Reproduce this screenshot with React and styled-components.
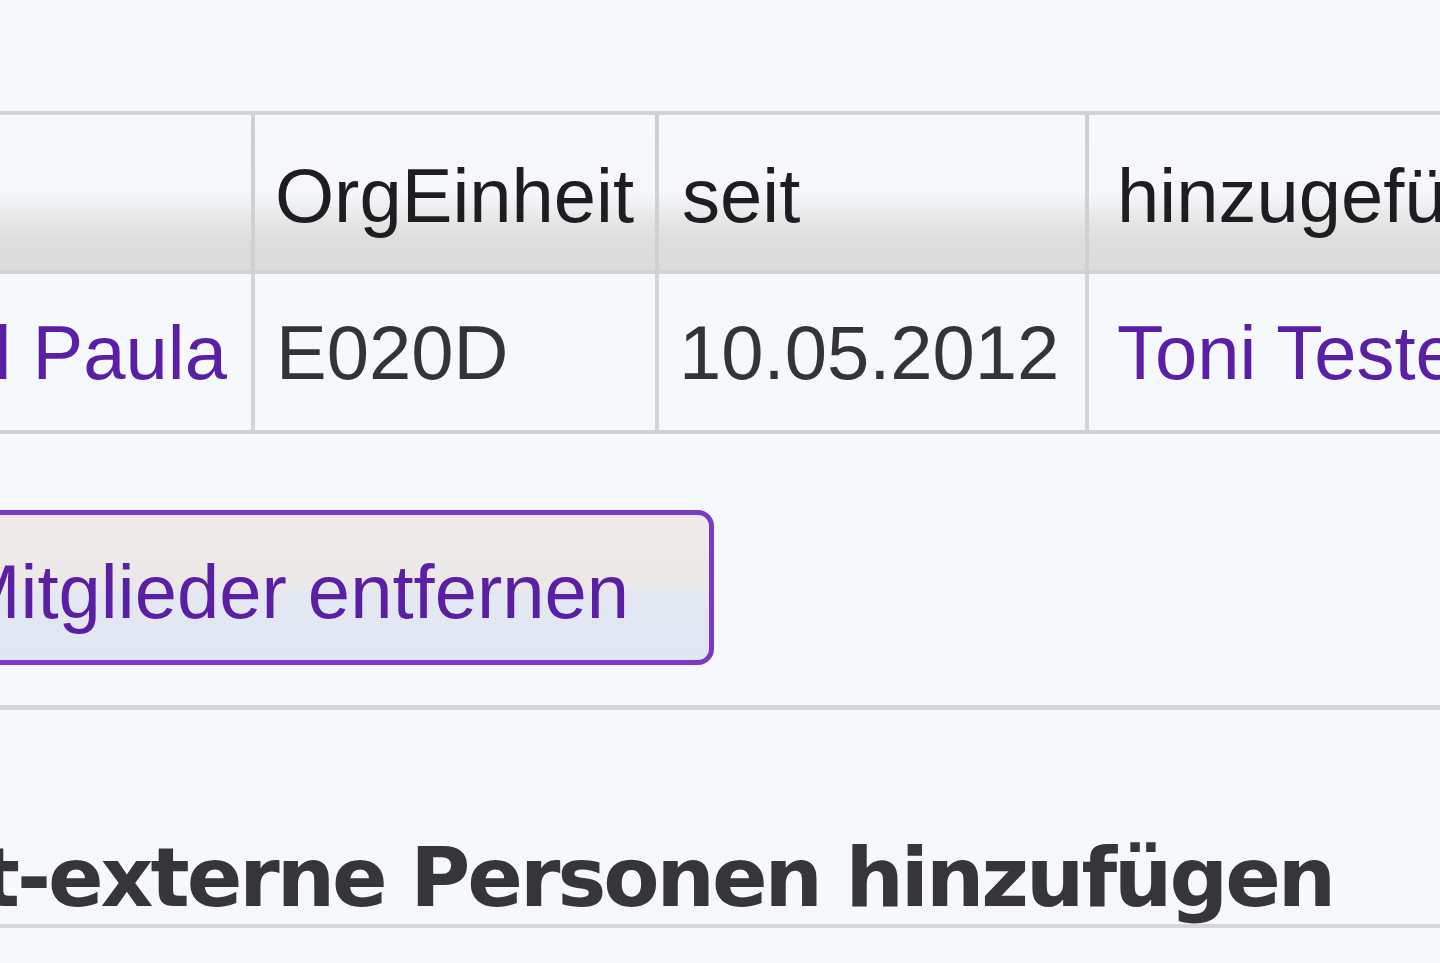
import React from "react";
import styled, { createGlobalStyle } from "styled-components";

const GlobalStyle = createGlobalStyle`
  html, body {
    margin: 0;
    padding: 0;
    background: #f6f9fb;
  }
  body {
    overflow: hidden;
    font-family: "Liberation Sans", Arial, sans-serif;
  }
`;

const Viewport = styled.div`
  width: 1440px;
  height: 963px;
  overflow: hidden;
  background: #f6f9fb;
`;

const Page = styled.div`
  width: 2600px;
  margin-left: -600px;
  padding-top: 111px;
`;

const Table = styled.div`
  display: grid;
  grid-template-columns: 851px 404px 430px 1fr;
  border-top: 4px solid #d3d4d6;
  border-bottom: 4px solid #d0d1d3;
  font-size: 76px;
  line-height: 86px;
`;

const HeadCell = styled.div`
  box-sizing: border-box;
  height: 159px;
  display: flex;
  align-items: center;
  padding: 6px 20px 0 ${(p) => p.$pad || 20}px;
  border-bottom: 4px solid #d2d2d4;
  border-left: ${(p) => (p.$first ? "none" : "4px solid #cfd0d3")};
  background: linear-gradient(
    to bottom,
    #f7f9fb 0%,
    #f5f7f8 50%,
    #e8e8e9 66%,
    #dddddd 80%,
    #dcdcdc 100%
  );
  color: #1e1e22;
  white-space: nowrap;
  overflow: hidden;
`;

const Cell = styled.div`
  box-sizing: border-box;
  height: 156px;
  display: flex;
  align-items: center;
  justify-content: ${(p) => (p.$end ? "flex-end" : "flex-start")};
  padding: 2px ${(p) => (p.$end ? 24 : 20)}px 0 ${(p) => p.$pad || 20}px;
  border-left: ${(p) => (p.$first ? "none" : "4px solid #d3d4d6")};
  color: #333338;
  white-space: nowrap;
  overflow: hidden;
`;

const Link = styled.a`
  color: #5a1fa4;
  text-decoration: none;
`;

const ButtonRow = styled.div`
  padding: 76px 0 0 21px;
  display: flex;
`;

const Button = styled.button`
  height: 155px;
  box-sizing: border-box;
  border: 5px solid #7c38c6;
  border-radius: 16px;
  padding: 8px 80px 0 75px;
  font-family: "Liberation Sans", Arial, sans-serif;
  font-size: 76px;
  line-height: 86px;
  color: #5a1fa4;
  white-space: nowrap;
  background: linear-gradient(
    to bottom,
    #efebeb 0%,
    #ece8e8 48%,
    #e3e8f3 54%,
    #e0e6f2 100%
  );
`;

const Divider = styled.div`
  margin-top: 40px;
  border-top: 5px solid #d6d7d9;
`;

const SectionTitle = styled.h2`
  margin: 122px 0 0;
  padding-left: 389px;
  font-family: "DejaVu Sans", Verdana, sans-serif;
  font-weight: bold;
  font-size: 82px;
  letter-spacing: -3px;
  line-height: 92px;
  color: #363638;
  white-space: nowrap;
  border-bottom: 4px solid #d6d7d9;
`;

export default function App() {
  return (
    <>
      <GlobalStyle />
      <Viewport>
        <Page>
          <Table>
            <HeadCell $first />
            <HeadCell $pad={20}>OrgEinheit</HeadCell>
            <HeadCell $pad={23}>seit</HeadCell>
            <HeadCell $pad={28}>hinzugefügt von</HeadCell>

            <Cell $first $end>
              <Link href="#">Vogel Paula</Link>
            </Cell>
            <Cell $pad={21}>E020D</Cell>
            <Cell $pad={20}>10.05.2012</Cell>
            <Cell $pad={28}>
              <Link href="#">Toni Tester</Link>
            </Cell>
          </Table>

          <ButtonRow>
            <Button type="button">Ausgewählte Mitglieder entfernen</Button>
          </ButtonRow>

          <Divider />

          <SectionTitle>Nicht-externe Personen hinzufügen</SectionTitle>
        </Page>
      </Viewport>
    </>
  );
}
